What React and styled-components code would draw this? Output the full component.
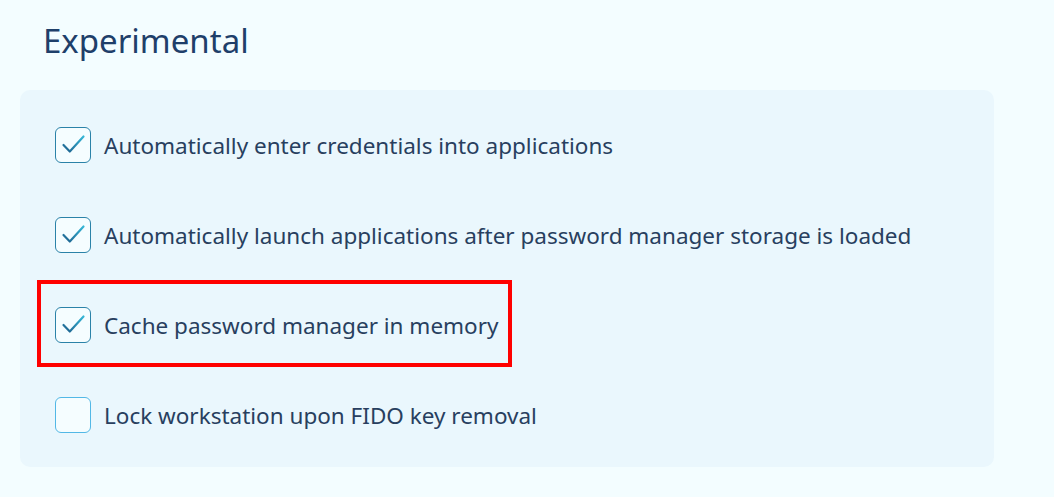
import React from 'react';
import styled, { createGlobalStyle } from 'styled-components';

const GlobalStyle = createGlobalStyle`
  html, body {
    margin: 0;
    padding: 0;
    background: #f3fdff;
  }
  body {
    font-family: "Noto Sans", "Open Sans", sans-serif;
  }
`;

const options = [
  { label: 'Automatically enter credentials into applications', checked: true },
  { label: 'Automatically launch applications after password manager storage is loaded', checked: true },
  { label: 'Cache password manager in memory', checked: true, highlighted: true },
  { label: 'Lock workstation upon FIDO key removal', checked: false },
];

const CheckMark = () => (
  <svg width="36" height="36" viewBox="0 0 36 36" fill="none">
    <defs>
      <linearGradient id="ck" x1="0" y1="1" x2="1" y2="0">
        <stop offset="0" stopColor="#1d5f8c" />
        <stop offset="1" stopColor="#35b6d6" />
      </linearGradient>
    </defs>
    <path d="M8.5 18 L14.8 24.5 L28.5 9.5" stroke="url(#ck)" strokeWidth="2.2" strokeLinecap="round" strokeLinejoin="round" />
  </svg>
);

export default function App() {
  return (
    <Page>
      <GlobalStyle />
      <Title>Experimental</Title>
      <Panel>
        {options.map((o) => (
          <Row key={o.label} highlighted={o.highlighted ? 1 : 0}>
            <Box checked={o.checked ? 1 : 0}>{o.checked && <CheckMark />}</Box>
            <Label>{o.label}</Label>
          </Row>
        ))}
      </Panel>
    </Page>
  );
}

const Page = styled.div`
  width: 1054px;
  height: 497px;
  padding: 20px 0 0 20px;
  box-sizing: border-box;
`;

const Title = styled.h1`
  margin: 0 0 0 23px;
  font-size: 33px;
  font-weight: 400;
  line-height: 42px;
  color: #1e3f6a;
  height: 70px;
`;

const Panel = styled.div`
  width: 974px;
  height: 377px;
  box-sizing: border-box;
  background: #eaf7fd;
  border-radius: 10px;
  padding: 37px 35px 34px;
  display: flex;
  flex-direction: column;
  align-items: flex-start;
  gap: 54px;
`;

const Row = styled.div`
  position: relative;
  display: flex;
  align-items: center;
  gap: 13px;
  height: 36px;

  ${(p) => p.highlighted && `
    &::after {
      content: '';
      position: absolute;
      left: -18px;
      right: -13px;
      top: -27px;
      bottom: -24px;
      border: 4px solid #ff0000;
    }
  `}
`;

const Box = styled.div`
  width: 36px;
  height: 36px;
  box-sizing: border-box;
  border-radius: 6px;
  background: #f5fdff;
  position: relative;
  flex-shrink: 0;
  border: 1.5px solid ${(p) => (p.checked ? '#2a82a8' : '#52b8e6')};
  display: flex;
  align-items: center;
  justify-content: center;

  svg {
    position: absolute;
    left: -1.5px;
    top: -1.5px;
  }
`;

const Label = styled.span`
  font-size: 22.5px;
  color: #283f5f;
  white-space: nowrap;
`;
